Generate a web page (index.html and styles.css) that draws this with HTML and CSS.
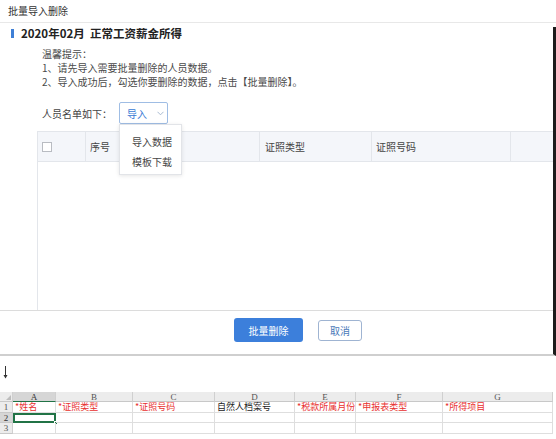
FILE: index.html
```html
<!DOCTYPE html>
<html lang="zh">
<head>
<meta charset="utf-8">
<title>批量导入删除</title>
<link rel="stylesheet" href="styles.css">
</head>
<body>
<div class="page">
  <div class="topbar">批量导入删除</div>
  <div class="dialog">
    <div class="title"><span class="bar"></span><span class="title-text">2020年02月&nbsp; 正常工资薪金所得</span></div>
    <div class="tips">
      <p>温馨提示：</p>
      <p>1、请先导入需要批量删除的人员数据。</p>
      <p>2、导入成功后，勾选你要删除的数据，点击【批量删除】。</p>
    </div>
    <div class="members">
      <span class="label">人员名单如下：</span>
      <div class="dd">
        <div class="dd-btn">导入<svg class="chev" width="7" height="5" viewBox="0 0 7 5"><path d="M0.5 0.8 L3.5 3.8 L6.5 0.8" fill="none" stroke="#9fb3cc" stroke-width="0.9"/></svg></div>
        <ul class="dd-menu">
          <li>导入数据</li>
          <li>模板下载</li>
        </ul>
      </div>
    </div>
    <div class="grid">
      <div class="thead">
        <div class="th c-check"><span class="checkbox"></span></div>
        <div class="th c-no">序号</div>
        <div class="th c-name"></div>
        <div class="th c-type">证照类型</div>
        <div class="th c-id">证照号码</div>
        <div class="th c-more"></div>
      </div>
      <div class="tbody"></div>
    </div>
    <div class="actions">
      <div class="btn primary">批量删除</div>
      <div class="btn ghost">取消</div>
    </div>
  </div>
  <div class="between">
    <svg class="arrow" width="5" height="13" viewBox="0 0 5 13"><path d="M2.5 0 V11" stroke="#333" stroke-width="1"/><path d="M0.5 9 L2.5 12.5 L4.5 9 Z" fill="#333"/></svg>
  </div>
  <div class="sheet">
    <div class="hc corner"></div>
    <div class="hc sel-col">A</div>
    <div class="hc">B</div>
    <div class="hc">C</div>
    <div class="hc">D</div>
    <div class="hc">E</div>
    <div class="hc">F</div>
    <div class="hc">G</div>

    <div class="rn">1</div>
    <div class="cell red">*姓名</div>
    <div class="cell red">*证照类型</div>
    <div class="cell red">*证照号码</div>
    <div class="cell">自然人档案号</div>
    <div class="cell red">*税款所属月份</div>
    <div class="cell red">*申报表类型</div>
    <div class="cell red">*所得项目</div>

    <div class="rn sel-row">2</div>
    <div class="cell active"><span class="handle"></span></div>
    <div class="cell"></div>
    <div class="cell"></div>
    <div class="cell"></div>
    <div class="cell"></div>
    <div class="cell"></div>
    <div class="cell"></div>

    <div class="rn">3</div>
    <div class="cell"></div>
    <div class="cell"></div>
    <div class="cell"></div>
    <div class="cell"></div>
    <div class="cell"></div>
    <div class="cell"></div>
    <div class="cell"></div>
  </div>
</div>
</body>
</html>
```
FILE: styles.css
```css
* { box-sizing: border-box; margin: 0; padding: 0; }
html, body { width: 556px; height: 439px; overflow: hidden; background: #fff; }
body { font-family: "Noto Sans CJK SC", "Noto Sans", sans-serif; color: #333; }

.page { width: 556px; }

.topbar {
  height: 23px;
  padding-left: 8px;
  font-size: 10px;
  line-height: 22px;
  color: #333;
  border-bottom: 1px solid #e8e8e8;
}

.dialog {
  height: 329px;
  border-right: 3px solid #1c1c1c;
  border-bottom: 2px solid #cfcfcf;
}

.title {
  display: flex;
  align-items: center;
  height: 12px;
  margin-top: 4px;
  padding-left: 11px;
}
.bar { width: 3px; height: 9px; background: #3e7fd6; margin-right: 7px; }
.title-text { font-size: 11.5px; font-weight: 700; line-height: 12px; color: #222; white-space: pre; }

.tips {
  margin-top: 8px;
  padding-left: 42px;
  font-size: 10px;
  line-height: 14px;
  color: #4a4a4a;
}

.members {
  display: flex;
  align-items: center;
  height: 22px;
  margin-top: 13px;
  padding-left: 42px;
}
.label { width: 77px; font-size: 10px; color: #444; }
.dd { position: relative; }
.dd-btn {
  display: flex;
  align-items: center;
  width: 49px;
  height: 22px;
  padding-left: 7px;
  border: 1px solid #9fbde4;
  border-radius: 2px;
  font-size: 10px;
  color: #3a7bd5;
}
.chev { margin-left: 10px; }
.dd-menu {
  position: absolute;
  top: 22px;
  left: 0;
  width: 63px;
  height: 51px;
  padding-top: 7px;
  list-style: none;
  background: #fff;
  border: 1px solid #e2e4e8;
  box-shadow: 0 1px 4px rgba(0, 0, 0, 0.1);
  z-index: 2;
}
.dd-menu li { padding-left: 12px; font-size: 10px; line-height: 20px; color: #444; }

.grid { margin-top: 7px; margin-left: 37px; width: 516px; }
.thead {
  display: flex;
  height: 31px;
  background: #f4f6fa;
  border-top: 1px solid #e3e6eb;
  border-bottom: 1px solid #e3e6eb;
}
.th {
  display: flex;
  align-items: center;
  padding-left: 4px;
  font-size: 10px;
  color: #444;
  border-right: 1px solid #e3e6eb;
}
.c-check { width: 49px; border-left: 1px solid #e3e6eb; }
.c-no { width: 64px; }
.c-name { width: 110px; }
.c-type { width: 112px; padding-left: 5px; }
.c-id { width: 139px; }
.c-more { width: 42px; border-right: none; }
.checkbox { width: 10px; height: 10px; border: 1px solid #b9bcc2; background: #fff; }
.tbody { height: 148px; border-left: 1px solid #e3e6eb; }

.actions {
  display: flex;
  align-items: flex-start;
  height: 38px;
  padding-left: 234px;
  padding-top: 7px;
  border-top: 1px solid #dcdcdc;
}
.btn {
  display: flex;
  align-items: center;
  justify-content: center;
  font-size: 10px;
  border-radius: 3px;
}
.primary { width: 69px; height: 24px; background: #3c7fdb; color: #fff; }
.ghost {
  width: 44px;
  height: 21px;
  margin-top: 2px;
  margin-left: 15px;
  border: 1px solid #9fb4d2;
  color: #4a78b8;
}

.between { height: 36px; padding-left: 3px; padding-top: 10px; }
.arrow { display: block; }

.sheet {
  display: grid;
  grid-template-columns: 13px 43px 77px 82px 80px 61px 87px 110px;
  grid-template-rows: 10px 11px 10px 11px;
  font-size: 9px;
}
.hc, .rn {
  display: flex;
  align-items: center;
  justify-content: center;
  background: #ececec;
  font-family: "Liberation Serif", serif;
  font-size: 9px;
  color: #555;
  border-right: 1px solid #d0d0d0;
  border-bottom: 1px solid #c8c8c8;
}
.corner { position: relative; }
.corner::after {
  content: "";
  position: absolute;
  right: 1px;
  bottom: 1px;
  border-left: 5px solid transparent;
  border-bottom: 5px solid #bdbdbd;
}
.sel-col { background: #d6d6d6; border-bottom: 1px solid #217346; color: #333; }
.sel-row { background: #d6d6d6; color: #333; }
.cell {
  position: relative;
  font-family: "Noto Sans CJK SC", sans-serif;
  font-size: 9px;
  line-height: 10px;
  padding-left: 2px;
  white-space: nowrap;
  color: #222;
  border-right: 1px solid #dedede;
  border-bottom: 1px solid #dedede;
}
.red { color: #e8302e; }
.active { border: 2px solid #217346; }
.handle {
  position: absolute;
  right: -4px;
  bottom: -4px;
  width: 4px;
  height: 4px;
  background: #217346;
  border: 1px solid #fff;
}
```
